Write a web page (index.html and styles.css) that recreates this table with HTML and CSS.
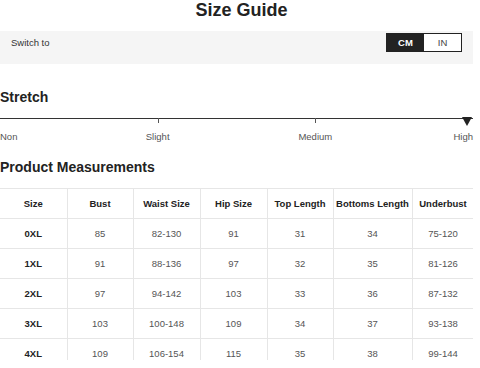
FILE: index.html
```html
<!DOCTYPE html>
<html>
<head>
<meta charset="utf-8">
<link rel="stylesheet" href="styles.css">
</head>
<body>
<div class="page">
  <h1 class="title">Size Guide</h1>
  <div class="switch-bar">
    <div class="switch-row">
      <span class="switch-label">Switch to</span>
      <div class="toggle">
        <span class="toggle-opt active">CM</span>
        <span class="toggle-opt">IN</span>
      </div>
    </div>
  </div>

  <h2 class="section-title stretch-title">Stretch</h2>
  <div class="scale">
    <span class="tick tick-1"></span>
    <span class="tick tick-2"></span>
    <span class="marker"></span>
  </div>
  <div class="scale-labels">
    <span class="lbl lbl-non">Non</span>
    <span class="lbl lbl-slight">Slight</span>
    <span class="lbl lbl-medium">Medium</span>
    <span class="lbl lbl-high">High</span>
  </div>

  <h2 class="section-title pm-title">Product Measurements</h2>
  <div class="table-wrap">
    <table class="sizes">
      <colgroup>
        <col class="c1"><col class="c2"><col class="c3"><col class="c4"><col class="c5"><col class="c6"><col class="c7">
      </colgroup>
      <thead>
        <tr><th>Size</th><th>Bust</th><th>Waist Size</th><th>Hip Size</th><th>Top Length</th><th>Bottoms Length</th><th>Underbust</th></tr>
      </thead>
      <tbody>
        <tr><th>0XL</th><td>85</td><td>82-130</td><td>91</td><td>31</td><td>34</td><td>75-120</td></tr>
        <tr><th>1XL</th><td>91</td><td>88-136</td><td>97</td><td>32</td><td>35</td><td>81-126</td></tr>
        <tr><th>2XL</th><td>97</td><td>94-142</td><td>103</td><td>33</td><td>36</td><td>87-132</td></tr>
        <tr><th>3XL</th><td>103</td><td>100-148</td><td>109</td><td>34</td><td>37</td><td>93-138</td></tr>
        <tr><th>4XL</th><td>109</td><td>106-154</td><td>115</td><td>35</td><td>38</td><td>99-144</td></tr>
      </tbody>
    </table>
  </div>
</div>
</body>
</html>
```
FILE: styles.css
```css
* { box-sizing: border-box; }
html, body { margin: 0; padding: 0; background: #fff; }
body {
  font-family: "Liberation Sans", Arial, sans-serif;
  color: #222;
}
.page { width: 473px; }

.title {
  margin: 0;
  padding-left: 10px;
  font-size: 18px;
  line-height: 20px;
  font-weight: bold;
  text-align: center;
  color: #222;
}

.switch-bar {
  margin-top: 11px;
  height: 33px;
  background: #f5f5f5;
  padding: 2px 11px 0 11px;
}
.switch-row {
  height: 19px;
  display: flex;
  align-items: center;
  justify-content: space-between;
}
.switch-label { font-size: 9.5px; color: #333; }
.toggle {
  display: flex;
  height: 19px;
  border: 1px solid #222;
  background: #fff;
}
.toggle-opt {
  width: 37px;
  display: flex;
  align-items: center;
  justify-content: center;
  font-size: 9.5px;
  color: #444;
}
.toggle-opt.active { background: #222; color: #fff; font-weight: bold; }

.section-title {
  margin: 0;
  font-size: 14px;
  line-height: 16px;
  font-weight: bold;
  color: #222;
}
.stretch-title { margin-top: 25px; }

.scale {
  position: relative;
  margin-top: 13px;
  height: 1px;
  background: #333;
}
.tick {
  position: absolute;
  top: 0;
  width: 1px;
  height: 5px;
  background: #555;
}
.tick-1 { left: 33.33%; }
.tick-2 { left: 66.66%; }
.marker {
  position: absolute;
  top: -1px;
  right: 1px;
  width: 0;
  height: 0;
  border-left: 5px solid transparent;
  border-right: 5px solid transparent;
  border-top: 9px solid #222;
}

.scale-labels {
  margin-top: 12px;
  display: grid;
  grid-template-columns: repeat(6, 1fr);
  font-size: 9.5px;
  line-height: 12px;
  color: #555;
}
.lbl-non { grid-column: 1; text-align: left; }
.lbl-slight { grid-column: 2 / 4; text-align: center; }
.lbl-medium { grid-column: 4 / 6; text-align: center; }
.lbl-high { grid-column: 6; text-align: right; }

.pm-title { margin-top: 16px; }

.table-wrap {
  margin-top: 13px;
  height: 172px;
  overflow: hidden;
}
.sizes {
  width: 474px;
  table-layout: fixed;
  border-collapse: collapse;
  font-size: 9.5px;
}
.c1 { width: 67px; }
.c2 { width: 66px; }
.c3 { width: 67px; }
.c4 { width: 67px; }
.c5 { width: 66px; }
.c6 { width: 79px; }
.c7 { width: 62px; }
.sizes th, .sizes td {
  height: 30px;
  padding: 0;
  text-align: center;
  vertical-align: middle;
  border: 1px solid #e6e6e6;
}
.sizes tr > :first-child { border-left: none; }
.sizes th { font-weight: bold; color: #222; }
.sizes td { color: #555; }
```
